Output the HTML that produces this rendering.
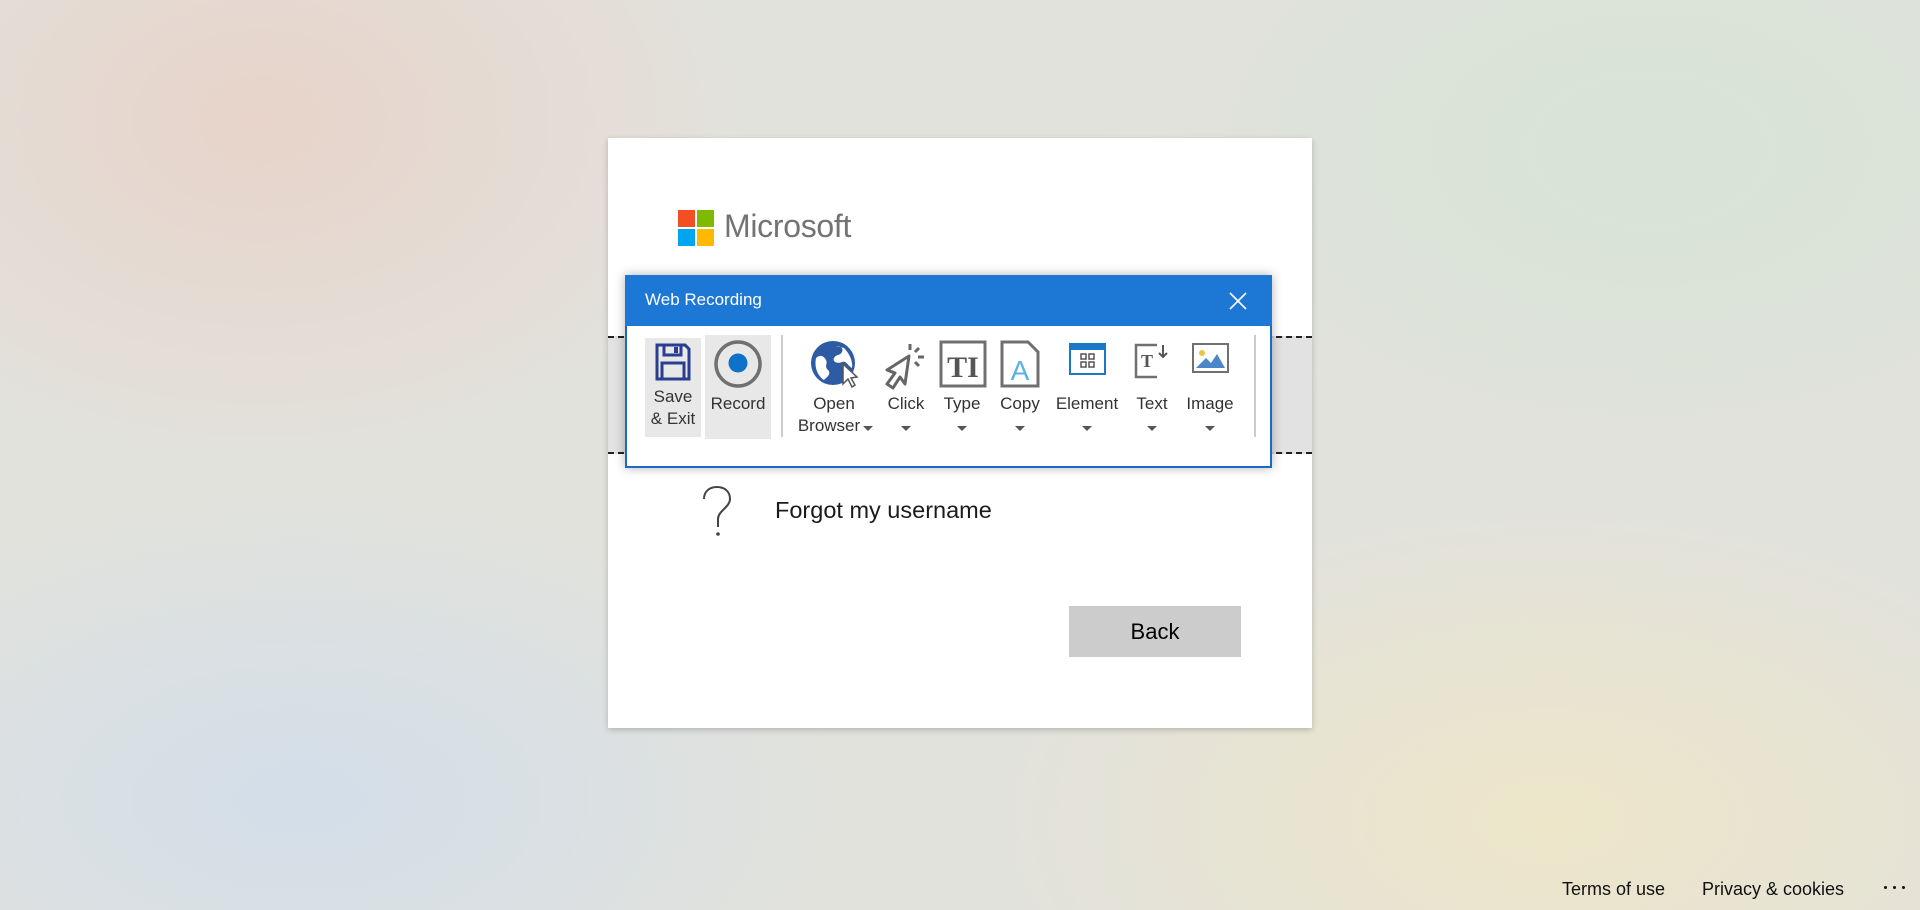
<!DOCTYPE html>
<html><head><meta charset="utf-8"><style>
*{margin:0;padding:0;box-sizing:border-box}
body{width:1920px;height:910px;overflow:hidden;font-family:"Liberation Sans",sans-serif;position:relative;
background:
radial-gradient(ellipse 700px 500px at 260px 120px,rgba(232,210,200,.9),rgba(232,210,200,0) 70%),
radial-gradient(ellipse 800px 500px at 1650px 150px,rgba(214,228,214,.9),rgba(214,228,214,0) 70%),
radial-gradient(ellipse 800px 450px at 300px 800px,rgba(210,222,234,.95),rgba(210,222,234,0) 70%),
radial-gradient(ellipse 800px 450px at 1550px 820px,rgba(238,230,200,.95),rgba(238,230,200,0) 70%),
#e2e2dc;}
.abs{position:absolute}
.card{left:608px;top:138px;width:704px;height:590px;background:#fff;box-shadow:0 2px 6px rgba(0,0,0,.2)}
.band{left:608px;top:336px;width:704px;height:118px;background:#e2e2e2;border-top:2px dashed #222;border-bottom:2px dashed #222}
.dlg{left:625px;top:275px;width:647px;height:193px;background:#fff;border:2px solid #1a6ac4;border-top:none;box-shadow:0 0 10px rgba(0,0,0,.3)}
.hdr{position:absolute;left:-2px;top:0;width:647px;height:51px;background:#1c78d4;color:#fff;font-size:17px;padding:15px 0 0 20px}
.lbl{position:absolute;font-size:17px;color:#333;text-align:center;white-space:nowrap;transform:translateX(-50%)}
.arr{position:absolute;width:0;height:0;border-left:5px solid transparent;border-right:5px solid transparent;border-top:5px solid #555;transform:translateX(-50%)}
</style></head><body>
<div class="abs card"></div>
<div class="abs band"></div>
<!-- logo -->
<div class="abs" style="left:678px;top:210px;width:17px;height:17px;background:#f25022"></div>
<div class="abs" style="left:697px;top:210px;width:17px;height:17px;background:#7fba00"></div>
<div class="abs" style="left:678px;top:229px;width:17px;height:17px;background:#00a4ef"></div>
<div class="abs" style="left:697px;top:229px;width:17px;height:17px;background:#ffb900"></div>
<div class="abs" style="left:724px;top:208px;font-size:32px;color:#737373;letter-spacing:-0.3px">Microsoft</div>

<svg class="abs" style="left:700px;top:485px" width="34" height="54" viewBox="0 0 34 54"><path d="M4 14C4 6 10 2 17 2S30 6 30 14C30 22 18 26 18 34V42" fill="none" stroke="#444" stroke-width="2"/><circle cx="18" cy="49" r="1.8" fill="#444"/></svg>
<div class="abs" style="left:775px;top:497px;font-size:23.5px;color:#1b1b1b">Forgot my username</div>
<div class="abs" style="left:1069px;top:606px;width:172px;height:51px;background:#ccc;font-size:22px;color:#000;text-align:center;line-height:51px">Back</div>

<div class="abs dlg">
 <div class="hdr">Web Recording</div>
 <svg class="abs" style="left:601px;top:16px" width="20" height="20" viewBox="0 0 20 20"><path d="M2 2L18 18M18 2L2 18" stroke="#fff" stroke-width="1.6"/></svg>
</div>
<!-- toolbar -->
<div class="abs" style="left:645px;top:338px;width:56px;height:99px;background:#e8e8e8"></div>
<div class="abs" style="left:705px;top:335px;width:66px;height:104px;background:#e8e8e8"></div>
<div class="abs" style="left:781px;top:335px;width:2px;height:102px;background:#ccc"></div>
<div class="abs" style="left:1254px;top:335px;width:2px;height:102px;background:#ccc"></div>
<svg class="abs" style="left:655px;top:343px" width="36" height="38" viewBox="0 0 36 38"><path d="M2 2H30L34 6V36H2Z" fill="none" stroke="#2a3d8f" stroke-width="3"/><path d="M9 2V12H26V2" fill="none" stroke="#2a3d8f" stroke-width="3"/><rect x="19" y="4" width="4" height="6" fill="#2a3d8f"/><path d="M7 36V20H29V36" fill="none" stroke="#2a3d8f" stroke-width="3"/></svg>
<svg class="abs" style="left:713px;top:339px" width="50" height="50" viewBox="0 0 50 50"><circle cx="25" cy="25" r="22" fill="none" stroke="#707070" stroke-width="3.5"/><circle cx="25" cy="24" r="9.5" fill="#0e72c8"/></svg>
<svg class="abs" style="left:810px;top:340px" width="52" height="50" viewBox="0 0 52 50"><circle cx="23" cy="23" r="22" fill="#2d5ca4"/><path d="M6 18c4-4 8-2 10 2s-2 6 2 10-2 8-4 10c-6-4-10-12-8-22zM26 6c4 0 8 2 6 6s-6 2-8 6 4 6 8 4 6 4 10 6c1-6-2-14-8-20z" fill="#fff"/><path d="M33 24L33 44L38 39L42 47L45 45L41 38L47 37Z" fill="#fff" stroke="#555" stroke-width="1.5"/></svg>
<svg class="abs" style="left:883px;top:340px" width="46" height="50" viewBox="0 0 46 50"><path d="M26 16L4 30L12 33L4 44L10 48L17 37L22 44Z" fill="none" stroke="#666" stroke-width="3" stroke-linejoin="round"/><path d="M27 4V10M36 8L32 12M41 17H35M36 26L32 22" stroke="#666" stroke-width="3"/></svg>
<svg class="abs" style="left:939px;top:340px" width="48" height="48" viewBox="0 0 48 48"><rect x="2" y="2" width="44" height="44" fill="none" stroke="#707070" stroke-width="3"/><text x="24" y="37" font-family="Liberation Serif" font-weight="bold" font-size="30" fill="#555" text-anchor="middle">TI</text></svg>
<svg class="abs" style="left:1000px;top:340px" width="40" height="48" viewBox="0 0 40 48"><path d="M2 2H28L38 12V46H2Z" fill="none" stroke="#707070" stroke-width="3"/><text x="20" y="40" font-family="Liberation Sans" font-size="28" fill="#5ab0e8" text-anchor="middle">A</text></svg>
<svg class="abs" style="left:1069px;top:343px" width="37" height="32" viewBox="0 0 37 32"><rect x="1" y="1" width="35" height="30" fill="#fff" stroke="#1b78c8" stroke-width="2"/><rect x="0" y="0" width="37" height="7" fill="#1b78c8"/><rect x="12" y="11" width="5" height="5" fill="none" stroke="#555" stroke-width="1.5"/><rect x="20" y="11" width="5" height="5" fill="none" stroke="#555" stroke-width="1.5"/><rect x="12" y="19" width="5" height="5" fill="none" stroke="#555" stroke-width="1.5"/><rect x="20" y="19" width="5" height="5" fill="none" stroke="#555" stroke-width="1.5"/></svg>
<svg class="abs" style="left:1133px;top:343px" width="38" height="36" viewBox="0 0 38 36"><path d="M24 2H3V34H24" fill="none" stroke="#707070" stroke-width="2.5"/><text x="14" y="24" font-family="Liberation Serif" font-weight="bold" font-size="18" fill="#555" text-anchor="middle">T</text><path d="M30 2V14M26 10L30 14L34 10" fill="none" stroke="#555" stroke-width="2"/></svg>
<svg class="abs" style="left:1192px;top:343px" width="37" height="30" viewBox="0 0 37 30"><rect x="1" y="1" width="35" height="28" fill="#fff" stroke="#707070" stroke-width="2"/><circle cx="10" cy="10" r="3" fill="#f0c040"/><path d="M4 25L14 15L19 20L25 11L33 25Z" fill="#4a86c8"/></svg>

<div class="lbl" style="left:673px;top:387px">Save</div>
<div class="lbl" style="left:673px;top:409px">&amp; Exit</div>
<div class="lbl" style="left:738px;top:394px">Record</div>
<div class="lbl" style="left:834px;top:394px">Open</div>
<div class="lbl" style="left:829px;top:416px">Browser</div><div class="arr" style="left:868px;top:426px"></div>
<div class="lbl" style="left:906px;top:394px">Click</div><div class="arr" style="left:906px;top:426px"></div>
<div class="lbl" style="left:962px;top:394px">Type</div><div class="arr" style="left:962px;top:426px"></div>
<div class="lbl" style="left:1020px;top:394px">Copy</div><div class="arr" style="left:1020px;top:426px"></div>
<div class="lbl" style="left:1087px;top:394px">Element</div><div class="arr" style="left:1087px;top:426px"></div>
<div class="lbl" style="left:1152px;top:394px">Text</div><div class="arr" style="left:1152px;top:426px"></div>
<div class="lbl" style="left:1210px;top:394px">Image</div><div class="arr" style="left:1210px;top:426px"></div>

<div class="abs" style="left:1562px;top:879px;font-size:18px;color:#111">Terms of use</div>
<div class="abs" style="left:1702px;top:879px;font-size:18px;color:#111">Privacy &amp; cookies</div>
<div class="abs" style="left:1884px;top:886px;width:3px;height:3px;background:#111;border-radius:50%;box-shadow:9px 0 0 #111,18px 0 0 #111"></div>
</body></html>
